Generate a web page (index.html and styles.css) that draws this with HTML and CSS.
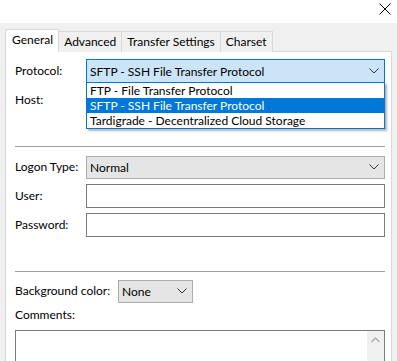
FILE: index.html
```html
<!DOCTYPE html>
<html>
<head>
<meta charset="utf-8">
<link rel="stylesheet" href="styles.css">
</head>
<body>
<div class="titlebar">
  <svg class="close" width="12" height="12" viewBox="0 0 12 12"><path d="M0.5 0.5 L11.5 11.5 M11.5 0.5 L0.5 11.5" stroke="#000" stroke-width="1" fill="none"/></svg>
</div>
<div class="dialog">
  <div class="tabs">
    <div class="tab active">General</div>
    <div class="tab">Advanced</div>
    <div class="tab">Transfer Settings</div>
    <div class="tab">Charset</div>
  </div>
  <div class="panel">
    <div class="row r-protocol">
      <span class="label">Protocol:</span>
      <div class="combo focused">
        <span>SFTP - SSH File Transfer Protocol</span>
        <svg class="chev" width="10" height="6" viewBox="0 0 10 6"><path d="M0.5 0.5 L5 5 L9.5 0.5" stroke="#333" fill="none"/></svg>
      </div>
      <div class="droplist">
        <div class="item">FTP - File Transfer Protocol</div>
        <div class="item sel">SFTP - SSH File Transfer Protocol</div>
        <div class="item">Tardigrade - Decentralized Cloud Storage</div>
      </div>
    </div>
    <div class="row r-host">
      <span class="label">Host:</span>
    </div>
    <div class="sep s1"></div>
    <div class="row r-logon">
      <span class="label">Logon Type:</span>
      <div class="combo grey">
        <span>Normal</span>
        <svg class="chev" width="10" height="6" viewBox="0 0 10 6"><path d="M0.5 0.5 L5 5 L9.5 0.5" stroke="#333" fill="none"/></svg>
      </div>
    </div>
    <div class="row r-user">
      <span class="label">User:</span>
      <div class="input"></div>
    </div>
    <div class="row r-pass">
      <span class="label">Password:</span>
      <div class="input"></div>
    </div>
    <div class="sep s2"></div>
    <div class="row r-bg">
      <span class="label-auto">Background color:</span>
      <div class="combo grey small">
        <span>None</span>
        <svg class="chev" width="10" height="6" viewBox="0 0 10 6"><path d="M0.5 0.5 L5 5 L9.5 0.5" stroke="#333" fill="none"/></svg>
      </div>
    </div>
    <div class="comments-label">Comments:</div>
    <div class="textarea">
      <div class="scrollbar">
        <svg width="9" height="6" viewBox="0 0 9 6"><path d="M0.5 5 L4.5 1 L8.5 5" stroke="#a6a6a6" stroke-width="1.2" fill="none"/></svg>
      </div>
    </div>
  </div>
</div>
</body>
</html>
```

FILE: styles.css
```css
html, body {
  margin: 0;
  padding: 0;
}
body {
  width: 397px;
  height: 361px;
  overflow: hidden;
  background: #f0f0f0;
  font-family: Lato, "Noto Sans", sans-serif;
  font-size: 12px;
  color: #000;
}
.titlebar {
  height: 23px;
  background: #fff;
  display: flex;
  justify-content: flex-end;
  align-items: flex-start;
  padding-right: 6px;
}
.close {
  margin-top: 3px;
}
.dialog {
  padding: 6px 5px 0 5px;
}
.tabs {
  display: flex;
  align-items: flex-end;
  height: 23px;
  position: relative;
  z-index: 2;
  margin-bottom: -1px;
}
.tab {
  height: 21px;
  box-sizing: border-box;
  border: 1px solid #d9d9d9;
  border-bottom: none;
  border-left: none;
  padding: 0 5px;
  line-height: 20px;
  background: #f0f0f0;
  white-space: nowrap;
}
.tab.active {
  height: 23px;
  line-height: 20px;
  background: #fff;
  border-left: 1px solid #d9d9d9;
  padding: 0 5px 0 6px;
}
.panel {
  background: #fff;
  border: 1px solid #d9d9d9;
  height: 320px;
  box-sizing: border-box;
  padding: 7px 6px 0 9px;
  display: flex;
  flex-direction: column;
  position: relative;
}
.panel > * {
  flex: none;
}
.row {
  display: flex;
  align-items: center;
  height: 24px;
  position: relative;
  white-space: nowrap;
}
.label {
  width: 71px;
  flex: none;
  margin-top: -2px;
}
.label-auto {
  width: 103px;
  flex: none;
  margin-top: -2px;
}
.combo {
  flex: 1;
  height: 24px;
  box-sizing: border-box;
  display: flex;
  align-items: center;
  justify-content: space-between;
  padding: 0 4px 0 3px;
}
.combo.focused {
  background: #cce4f7;
  border: 1px solid #0078d7;
}
.combo.grey {
  background: #e5e5e5;
  border: 1px solid #adadad;
  height: 23px;
}
.combo.small {
  flex: none;
  width: 75px;
}
.chev {
  margin-right: 1px;
}
.droplist {
  position: absolute;
  left: 71px;
  right: 0;
  top: 23px;
  background: #fff;
  border: 1px solid #0078d7;
  box-shadow: 2px 2px 2px rgba(0,0,0,0.3);
  z-index: 5;
}
.item {
  height: 15px;
  line-height: 15px;
  padding-left: 3px;
  white-space: nowrap;
}
.item.sel {
  background: #0078d7;
  color: #fff;
}
.r-host {
  margin-top: 5px;
}
.sep {
  height: 1px;
  background: #a0a0a0;
}
.s1 {
  margin-top: 34px;
}
.r-logon {
  margin-top: 8px;
}
.r-user {
  margin-top: 5px;
}
.r-pass {
  margin-top: 5px;
}
.input {
  flex: 1;
  height: 24px;
  box-sizing: border-box;
  border: 1px solid #7a7a7a;
  background: #fff;
}
.s2 {
  margin-top: 34px;
}
.r-bg {
  margin-top: 7px;
}
.comments-label {
  margin-top: 3px;
  height: 17px;
  line-height: 17px;
}
.textarea {
  margin-top: 7px;
  height: 60px;
  border: 1px solid #7a7a7a;
  display: flex;
  justify-content: flex-end;
}
.scrollbar {
  width: 17px;
  background: #f0f0f0;
  display: flex;
  justify-content: center;
  padding-top: 6px;
}
.scrollbar svg {
  display: block;
}
```
